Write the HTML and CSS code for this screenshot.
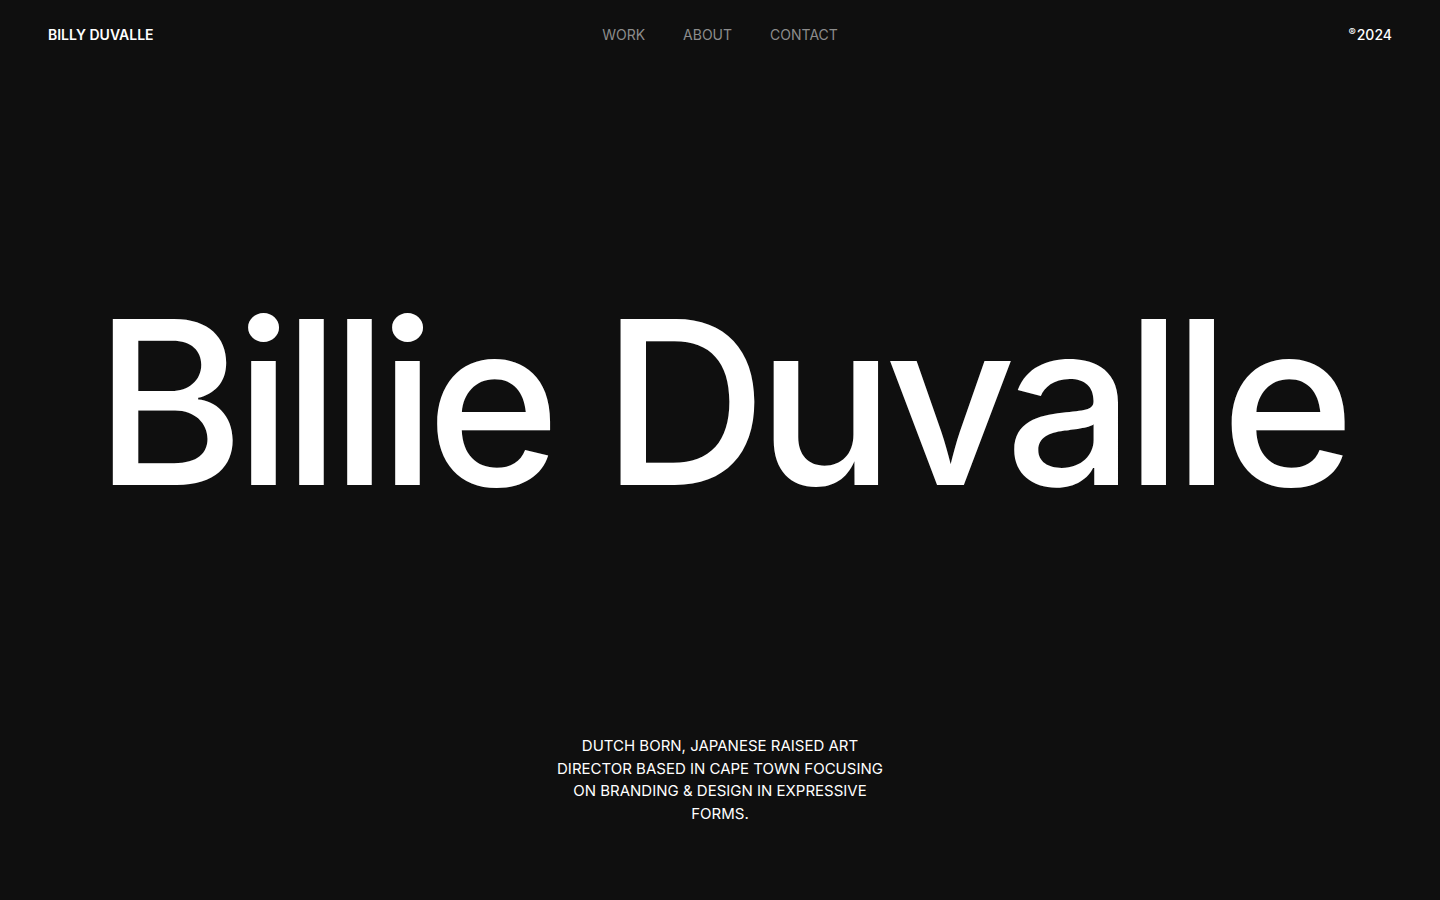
FILE: index.html
```html
<!DOCTYPE html>
<html lang="en">
<head>
<meta charset="utf-8">
<title>Billie Duvalle</title>
<link rel="stylesheet" href="styles.css">
</head>
<body>
<div class="page">
  <header class="topbar">
    <div class="brand">BILLY DUVALLE</div>
    <nav class="nav">
      <a href="#">WORK</a>
      <a href="#">ABOUT</a>
      <a href="#">CONTACT</a>
    </nav>
    <div class="year"><span class="reg">®</span>2024</div>
  </header>
  <main class="hero">
    <h1 class="title">Billie Duvalle</h1>
  </main>
  <footer class="intro">
    <p>DUTCH BORN, JAPANESE RAISED ART DIRECTOR BASED IN CAPE TOWN FOCUSING ON BRANDING &amp; DESIGN IN EXPRESSIVE FORMS.</p>
  </footer>
</div>
</body>
</html>
```
FILE: styles.css
```css
* { box-sizing: border-box; }
html, body { margin: 0; padding: 0; }
body {
  background: #0f0f0f;
  color: #ffffff;
  font-family: Inter, "Liberation Sans", sans-serif;
  height: 900px;
  overflow: hidden;
}
.page {
  height: 900px;
  display: flex;
  flex-direction: column;
}
.topbar {
  display: grid;
  grid-template-columns: 1fr auto 1fr;
  align-items: center;
  padding: 25px 48px 0 48px;
  font-size: 14px;
  font-weight: 500;
  line-height: 20px;
}
.brand { justify-self: start; font-weight: 600; }
.nav {
  display: flex;
  gap: 38px;
}
.nav a {
  color: #8c8c8c;
  text-decoration: none;
  font-weight: 400;
}
.year { justify-self: end; }
.year .reg {
  display: inline-block;
  font-size: 11px;
  line-height: 10px;
  vertical-align: top;
  margin-top: 2px;
  margin-right: 1px;
}
.hero {
  flex: 1;
  display: flex;
  align-items: center;
  justify-content: center;
  padding-top: 24px;
}
.title {
  margin: 0;
  font-size: 228px;
  font-weight: 500;
  letter-spacing: -9.5px;
  line-height: 1;
}
.intro {
  display: flex;
  justify-content: center;
  padding-bottom: 75px;
}
.intro p {
  margin: 0;
  width: 340px;
  text-align: center;
  font-size: 15px;
  line-height: 22.5px;
  font-weight: 400;
}
```
